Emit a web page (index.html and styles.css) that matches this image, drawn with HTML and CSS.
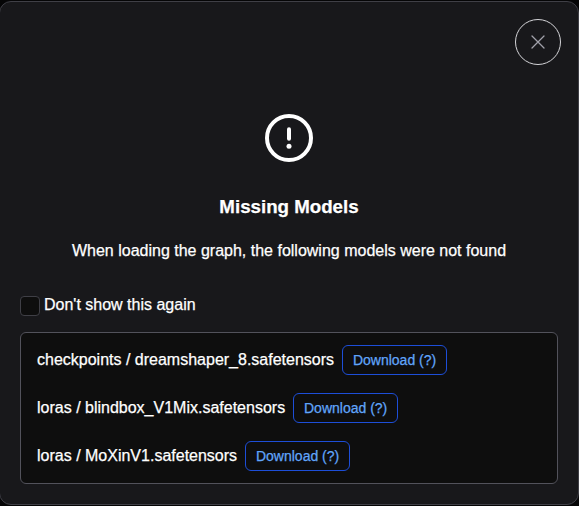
FILE: index.html
```html
<!DOCTYPE html>
<html lang="en">
<head>
<meta charset="utf-8">
<title>Missing Models</title>
<link rel="stylesheet" href="styles.css">
</head>
<body>
<main class="dialog" role="dialog" aria-labelledby="title">
  <header class="dialog-header">
    <button class="close" aria-label="Close">
      <svg width="14" height="14" viewBox="0 0 14 14" fill="none" stroke="currentColor" stroke-width="1.3" stroke-linecap="round"><path d="M1 1l12 12M13 1L1 13"/></svg>
    </button>
  </header>
  <section class="message">
    <svg class="alert" width="48" height="48" viewBox="0 0 48 48" fill="none" stroke="currentColor" stroke-width="4" stroke-linecap="round"><circle cx="24" cy="24" r="22"/><path d="M24 15.3v9.4"/><circle cx="24" cy="32.3" r="2.5" fill="currentColor" stroke="none"/></svg>
    <h1 id="title">Missing Models</h1>
    <p>When loading the graph, the following models were not found</p>
  </section>
  <label class="remember"><input type="checkbox"><span>Don't show this again</span></label>
  <ul class="models">
    <li><span>checkpoints / dreamshaper_8.safetensors</span><button class="download">Download (?)</button></li>
    <li><span>loras / blindbox_V1Mix.safetensors</span><button class="download">Download (?)</button></li>
    <li><span>loras / MoXinV1.safetensors</span><button class="download">Download (?)</button></li>
  </ul>
</main>
</body>
</html>
```
FILE: styles.css
```css
* { box-sizing: border-box; }
body {
  margin: 0;
  padding-top: 1px;
  height: 506px;
  overflow: hidden;
  background: #050506;
  color: #fff;
  font: 16px/18px "Liberation Sans", Arial, sans-serif;
  -webkit-text-stroke: 0.25px currentColor;
}
.dialog {
  height: 504px;
  margin-left: -1px;
  padding: 0 20px;
  background: #18181b;
  border: 1px solid #3f3f46;
  border-radius: 12px;
}
.dialog-header {
  display: flex;
  justify-content: flex-end;
  padding-top: 17px;
  margin-right: -3px;
}
.close {
  display: grid;
  place-items: center;
  width: 46px;
  height: 46px;
  padding: 0;
  border: 1px solid #d4d4d8;
  border-radius: 50%;
  background: transparent;
  color: #a1a1aa;
}
.message {
  display: flex;
  flex-direction: column;
  align-items: center;
  padding-top: 49px;
}
.alert { display: block; }
h1 {
  margin: 34px 0 0;
  font-size: 18.72px;
  line-height: 22px;
}
p { margin: 24px 0 0; white-space: nowrap; }
.remember {
  display: flex;
  align-items: flex-start;
  gap: 4px;
  margin-top: 36px;
  height: 20px;
}
.remember input {
  appearance: none;
  width: 20px;
  height: 20px;
  margin: 0;
  border: 1px solid #3f3f46;
  border-radius: 4px;
  background: #0e0e0e;
}
.models {
  display: flex;
  flex-direction: column;
  gap: 18px;
  margin: 16px 0 0;
  padding: 12px 16px;
  list-style: none;
  background: #0e0e0e;
  border: 1px solid #52525b;
  border-radius: 6px;
}
.models li { display: flex; align-items: center; gap: 8px; height: 30px; }
.download {
  width: 105px;
  height: 30px;
  padding: 0;
  border: 1px solid #1d4ed8;
  border-radius: 6px;
  background: transparent;
  color: #60a5fa;
  font: 14px/16px "Liberation Sans", Arial, sans-serif;
}
```
